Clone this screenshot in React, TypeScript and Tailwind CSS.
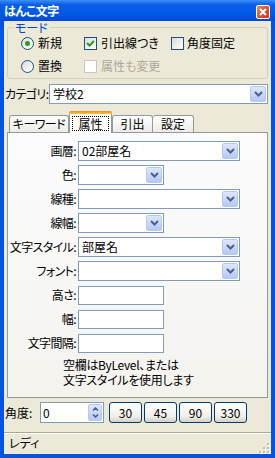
import React from "react";

const JP = "font-['Noto_Sans_CJK_JP','Noto_Sans_CJK_SC',sans-serif] [font-feature-settings:'palt']";

function DropBtn() {
  return (
    <div className="w-[16px] self-stretch m-[1px] rounded-[2px] border border-[#b4c8f3] bg-[linear-gradient(to_bottom,#dde7fe,#b4c9f6)] flex items-center justify-center">
      <svg width="9" height="6" viewBox="0 0 9 6">
        <path d="M1 1 L4.5 4.5 L8 1" fill="none" stroke="#4d6185" strokeWidth="2" />
      </svg>
    </div>
  );
}

function Combo({ value, w }: { value?: string; w: string }) {
  return (
    <div className={`${w} h-[20px] border border-[#7f9db9] bg-white flex items-stretch`}>
      <span className="flex-1 pl-[3px] text-[12px] leading-[18px] whitespace-nowrap">{value}</span>
      <DropBtn />
    </div>
  );
}

function Field() {
  return <div className="w-[86px] h-[19px] border border-[#7f9db9] bg-white" />;
}

function Row({ label, children }: { label: string; children: React.ReactNode }) {
  return (
    <div className="flex items-center h-[20px]">
      <span className="w-[68px] shrink-0 flex justify-end whitespace-nowrap text-[12px] leading-none tracking-[-0.6px]">{label}:</span>
      <div className="ml-[2px]">{children}</div>
    </div>
  );
}

function Radio({ checked }: { checked?: boolean }) {
  return (
    <div className="w-[13px] h-[13px] rounded-full border border-[#1c5180] bg-[linear-gradient(135deg,#dcdcd7,#ffffff)] flex items-center justify-center">
      {checked && <div className="w-[5px] h-[5px] rounded-full bg-[#21a121]" />}
    </div>
  );
}

function Check({ checked, disabled }: { checked?: boolean; disabled?: boolean }) {
  return (
    <div className={`w-[13px] h-[13px] border flex items-center justify-center ${disabled ? "border-[#cac8bb] bg-white" : "border-[#1c5180] bg-[linear-gradient(135deg,#dcdcd7,#ffffff)]"}`}>
      {checked && (
        <svg width="9" height="9" viewBox="0 0 9 9">
          <path d="M1 4 L3.5 6.5 L8 2" fill="none" stroke="#21a121" strokeWidth="2" />
        </svg>
      )}
    </div>
  );
}

function Btn({ label }: { label: string }) {
  return (
    <div className="w-[33px] h-[21px] rounded-[3px] border border-[#003c74] bg-[linear-gradient(to_bottom,#ffffff,#f0f0ea_70%,#d6d0c5)] flex items-center justify-center text-[12px]">
      {label}
    </div>
  );
}

export default function App() {
  return (
    <div className={`w-[275px] h-[458px] flex flex-col bg-[#0553e1] text-black ${JP}`}>
      {/* title bar */}
      <div className="h-[21px] flex items-start justify-between pl-[4px] pr-[5px] bg-[linear-gradient(to_bottom,#3d8ff8_0%,#0a5fe8_22%,#0058e6_70%,#0047d6_100%)]">
        <span className="text-white font-bold text-[12px] leading-[21px] tracking-[-0.5px]">はんこ文字</span>
        <div className="mt-[5px] w-[14px] h-[14px] rounded-[2px] border border-white bg-[linear-gradient(135deg,#f08c6c,#e2532d_50%,#c8381a)] flex items-center justify-center">
          <svg width="8" height="8" viewBox="0 0 8 8">
            <path d="M1 1 L7 7 M7 1 L1 7" stroke="white" strokeWidth="2" />
          </svg>
        </div>
      </div>

      {/* client */}
      <div className="flex-1 mx-[4px] mb-[4px] bg-[#ece9d8] flex flex-col">
        <fieldset className="mx-[3px] border border-[#d0d0bf] rounded-[3px] pb-[3px]">
          <legend className="ml-[5px] px-[2px] text-[12px] leading-[13px] text-[#0046d5]">モード</legend>
          <div className="grid grid-cols-[63px_87px_1fr] gap-y-[5px] pl-[13px] text-[12px] whitespace-nowrap">
            <div className="flex items-center gap-[4px] h-[18px]"><Radio checked /><span>新規</span></div>
            <div className="flex items-center gap-[4px] h-[18px]"><Check checked /><span>引出線つき</span></div>
            <div className="flex items-center gap-[3px] h-[18px]"><Check /><span>角度固定</span></div>
            <div className="flex items-center gap-[4px] h-[18px]"><Radio /><span>置換</span></div>
            <div className="flex items-center gap-[4px] h-[18px] text-[#aca899]"><Check disabled /><span>属性も変更</span></div>
            <div />
          </div>
        </fieldset>

        <div className="flex items-center mt-[5px] pl-[1px] pr-[3px]">
          <span className="w-[44px] shrink-0 whitespace-nowrap text-[12px] leading-none tracking-[-0.6px]">カテゴリ:</span>
          <Combo value="学校2" w="flex-1" />
        </div>

        {/* tabs */}
        <div className="flex items-end mt-[7px] ml-[5px] h-[21px] text-[12px] whitespace-nowrap">
          <div className="w-[60px] h-[17px] border border-b-0 border-[#919b9c] rounded-t-[3px] bg-[linear-gradient(to_bottom,#ffffff,#ecebe6)] flex items-center justify-center tracking-[-0.5px]">キーワード</div>
          <div className="relative z-10 -mb-[1px] w-[43px] h-[22px] border border-b-0 border-[#919b9c] rounded-t-[3px] bg-white flex flex-col">
            <div className="h-[3px] -mx-[1px] -mt-[1px] rounded-t-[3px] bg-[linear-gradient(to_bottom,#e68b2c,#ffc73c)]" />
            <div className="flex-1 m-[2px] border border-dotted border-black flex items-center justify-center leading-none">属性</div>
          </div>
          <div className="w-[41px] h-[17px] border border-b-0 border-[#919b9c] rounded-t-[3px] bg-[linear-gradient(to_bottom,#ffffff,#ecebe6)] flex items-center justify-center">引出</div>
          <div className="w-[41px] h-[17px] border border-b-0 border-l-0 border-[#919b9c] rounded-t-[3px] bg-[linear-gradient(to_bottom,#ffffff,#ecebe6)] flex items-center justify-center">設定</div>
        </div>

        <div className="mx-[3px] h-[266px] border border-[#919b9c] bg-[linear-gradient(to_bottom,#fcfcfe,#f4f3ee)] pt-[8px] flex flex-col gap-[4px]">
          <Row label="画層"><Combo value="02部屋名" w="w-[162px]" /></Row>
          <Row label="色"><Combo w="w-[86px]" /></Row>
          <Row label="線種"><Combo w="w-[162px]" /></Row>
          <Row label="線幅"><Combo w="w-[86px]" /></Row>
          <Row label="文字スタイル"><Combo value="部屋名" w="w-[162px]" /></Row>
          <Row label="フォント"><Combo w="w-[162px]" /></Row>
          <Row label="高さ"><Field /></Row>
          <Row label="幅"><Field /></Row>
          <Row label="文字間隔"><Field /></Row>
          <div className="ml-[55px] text-[12px] leading-[15px] whitespace-nowrap tracking-[-0.3px]">
            <div>空欄はByLevel、または</div>
            <div>文字スタイルを使用します</div>
          </div>
        </div>

        <div className="flex items-center mt-[4px] pl-[1px]">
          <span className="w-[35px] shrink-0 whitespace-nowrap text-[12px] leading-none">角度:</span>
          <div className="w-[64px] h-[21px] border border-[#7f9db9] bg-white flex items-stretch">
            <span className="flex-1 pl-[2px] text-[12px] leading-[19px]">0</span>
            <div className="w-[14px] m-[1px] rounded-[2px] border border-[#b4c8f3] bg-[linear-gradient(to_bottom,#dde7fe,#b4c9f6)] flex flex-col items-center justify-center gap-[3px]">
              <svg width="7" height="4" viewBox="0 0 7 4"><path d="M1 3.5 L3.5 1 L6 3.5" fill="none" stroke="#4d6185" strokeWidth="1.6" /></svg>
              <svg width="7" height="4" viewBox="0 0 7 4"><path d="M1 0.5 L3.5 3 L6 0.5" fill="none" stroke="#4d6185" strokeWidth="1.6" /></svg>
            </div>
          </div>
          <div className="flex gap-[2px] ml-[5px]">
            <Btn label="30" />
            <Btn label="45" />
            <Btn label="90" />
            <Btn label="330" />
          </div>
        </div>

        <div className="mt-auto border-t border-[#aca899] shadow-[inset_0_1px_0_#ffffff] h-[22px] flex items-end justify-between pl-[5px] pr-[1px]">
          <span className="text-[12px] leading-none mb-[5px]">レディ</span>
          <svg width="12" height="12" viewBox="0 0 12 12">
            {[[9, 1], [9, 5], [5, 5], [9, 9], [5, 9], [1, 9]].map(([x, y], i) => (
              <g key={i}>
                <rect x={x + 1} y={y + 1} width="2" height="2" fill="#ffffff" />
                <rect x={x} y={y} width="2" height="2" fill="#c1bdac" />
              </g>
            ))}
          </svg>
        </div>
      </div>
    </div>
  );
}
